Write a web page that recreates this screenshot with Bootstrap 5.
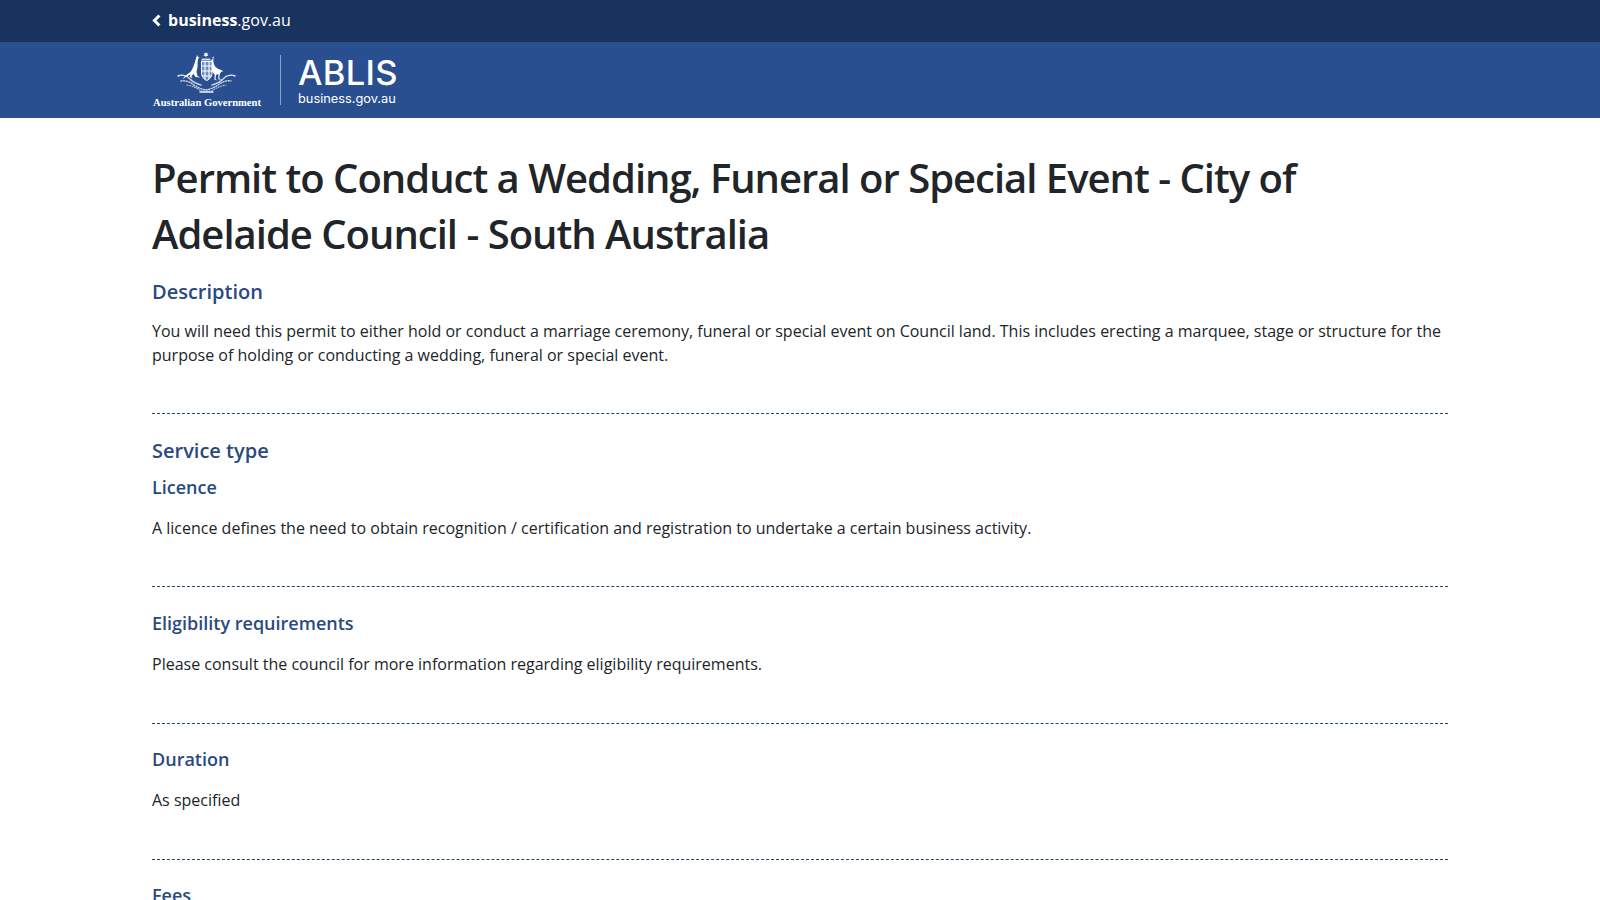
<!DOCTYPE html>
<html lang="en"><head><meta charset="utf-8"><title>ABLIS</title>
<link href="https://cdn.jsdelivr.net/npm/bootstrap@5.3.0/dist/css/bootstrap.min.css" rel="stylesheet">
<style>
html,body{height:900px;overflow:hidden}
body{font-family:"Open Sans",sans-serif;color:#212529;font-size:16px;line-height:24px}
.top-strip{background:#19335f;height:42px}
.top-strip a{color:#fff;text-decoration:none;font-size:16px;line-height:40px}
.brand-bar{background:#294f91;height:76px}
.crest-box{width:110px;height:56px;color:#fff}
.crest-name{font-family:"Liberation Serif",serif;font-weight:700;font-size:10.6px;line-height:11px;white-space:nowrap;color:#fff}
.brand-rule{width:1px;height:50px;background:#8fa5cb;margin:0 17px 0 18px}
.brand-name{font-family:"Inter",sans-serif;font-size:34.5px;line-height:36px;font-weight:500;color:#fff;letter-spacing:.3px}
.brand-sub{font-family:"Inter",sans-serif;font-size:12.8px;line-height:14px;color:#fff;margin-top:1px;white-space:nowrap}
.page-title{font-size:40px;line-height:56px;font-weight:600;letter-spacing:-1px;margin:0;padding-top:32px;margin-bottom:16px}
.sect-h{font-size:20px;line-height:28px;font-weight:600;color:#2a4a7f;margin:0 0 13px}
.sect-h.tight{margin-bottom:10px}
.sect-h.sub{font-size:18px;line-height:24px;margin-bottom:17px}
.sect-p{margin:0}
.dash{border-top:1px dashed #1f4a6e;margin:46px 0 23px}
.dash.deep{margin-bottom:24px}
.dash.long{margin-top:47px}
</style></head><body>
<div class="top-strip"><div class="container"><a href="#" class="d-inline-flex align-items-center gap-1"><svg width="12" height="16" viewBox="0 0 12 16" aria-hidden="true"><path d="M7.400 3.500 2.400 8.500l5 5" fill="none" stroke="#fff" stroke-width="3"/></svg><span><b>business</b>.gov.au</span></a></div></div>
<div class="brand-bar"><div class="container h-100 d-flex align-items-center">
<div class="crest-box d-flex flex-column align-items-center">
<svg width="60" height="42" viewBox="0 0 60 42" aria-hidden="true" fill="#fff">
<path d="M29 0l.7 1.500 1.600-.3-.9 1.400 1 1.300-1.600-.1-.8 1.500-.8-1.500-1.600.1 1-1.300-.9-1.400 1.600.3z"/>
<path d="M25 6.500h8l1 2h-10z" opacity=".8"/>
<path d="M20 3l1 2 1.500.5-1.500 1.500-.5 4.500c.5 3-.5 6-1 8l1 4.500 3 1.500-5-.5-2-3-2 2 1 2-3-1 1-2.500-2 1-6 3.500c2-3 5-5 8-7 2-3 4-8 5-12z"/>
<path d="M36.500 4.500l-1.500 1 1.500.7c-.6 3 .2 6 1.800 8.500 2 2.500 5.500 2.500 8 4.500l-2 .5-1.500 2-.5 4.500 2.500 1.500-3.500-.5.200-5-2.500.5-.5 4.500 2 1-3-.3.200-5.200-2.500-3c-1.500-3-2-7-1-11 .6-1.500 1.500-2.500 2.800-2.200z"/>
<path d="M24.500 9.500h10.500v12q-.5 5-5.250 7-4.750-2-5.250-7z" fill="#6f8cbd" stroke="#fff" stroke-width="1"/>
<path d="M25 14h10M25 19h10M25 24h9M28 10v17M32 10v17" stroke="#fff" stroke-width="1.100" fill="none"/>
<g fill="none" stroke="#fff" stroke-linecap="round">
<path d="M1 24c5-2 9 0 12 3s7 5 11 6" stroke-width="1.400" stroke-dasharray="1.500 1.300" opacity=".85"/>
<path d="M58 24c-5-2-9 0-12 3s-7 5-11 6" stroke-width="1.400" stroke-dasharray="1.500 1.300" opacity=".85"/>
<path d="M4 29c5-1 9 1 13 4s8 4 12 5c4-1 8-2 12-5s8-5 13-4" stroke-width="1.300" stroke-dasharray="1.200 1.500" opacity=".8"/>
<path d="M10 33c6 1 10 3 14 6h11c4-3 8-5 14-6" stroke-width="1.100" stroke-dasharray="1 1.600" opacity=".7"/>
<path d="M23 40h13" stroke-width="1.500" opacity=".9"/>
</g></svg>
<div class="crest-name mt-auto">Australian Government</div></div>
<div class="brand-rule"></div>
<div><div class="brand-name">ABLIS</div><div class="brand-sub">business.gov.au</div></div>
</div></div>
<main class="container">
<h1 class="page-title">Permit to Conduct a Wedding, Funeral or Special Event - City of Adelaide Council - South Australia</h1>
<h2 class="sect-h">Description</h2>
<p class="sect-p">You will need this permit to either hold or conduct a marriage ceremony, funeral or special event on Council land. This includes erecting a marquee, stage or structure for the purpose of holding or conducting a wedding, funeral or special event.</p>
<div class="dash"></div>
<h2 class="sect-h tight">Service type</h2>
<h3 class="sect-h sub">Licence</h3>
<p class="sect-p">A licence defines the need to obtain recognition / certification and registration to undertake a certain business activity.</p>
<div class="dash deep"></div>
<h2 class="sect-h sub">Eligibility requirements</h2>
<p class="sect-p">Please consult the council for more information regarding eligibility requirements.</p>
<div class="dash long"></div>
<h2 class="sect-h sub">Duration</h2>
<p class="sect-p">As specified</p>
<div class="dash long"></div>
<h2 class="sect-h sub">Fees</h2>
</main>
<script src="https://cdn.jsdelivr.net/npm/bootstrap@5.3.0/dist/js/bootstrap.bundle.min.js"></script>
</body></html>
